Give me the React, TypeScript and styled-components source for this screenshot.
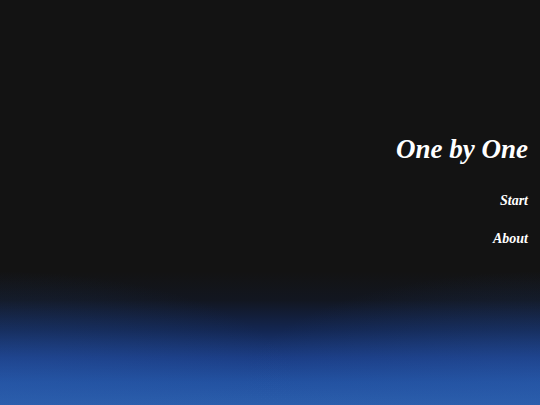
import styled, { createGlobalStyle } from 'styled-components';

const GlobalStyle = createGlobalStyle`
  html, body {
    margin: 0;
    padding: 0;
    background: #131313;
  }
`;

const Screen = styled.div`
  width: 540px;
  height: 405px;
  overflow: hidden;
  display: flex;
  flex-direction: column;
  align-items: flex-end;
  padding: 133px 12px 0 0;
  box-sizing: border-box;
  font-family: 'Liberation Serif', 'Times New Roman', serif;
  font-style: italic;
  font-weight: bold;
  color: #fff;
  background:
    radial-gradient(ellipse 55% 28% at 0% 95%, rgba(45, 95, 175, 0.3), rgba(45, 95, 175, 0) 100%),
    radial-gradient(ellipse 55% 28% at 100% 95%, rgba(45, 95, 175, 0.3), rgba(45, 95, 175, 0) 100%),
    linear-gradient(
      to bottom,
      #131313 0px,
      #131313 272px,
      #121620 300px,
      #132651 330px,
      #1b3d85 358px,
      #2251a0 382px,
      #2b5eac 405px
    );
`;

const Title = styled.h1`
  margin: 0;
  font-size: 27px;
  line-height: 32px;
  font-weight: bold;
`;

const Menu = styled.nav`
  display: flex;
  flex-direction: column;
  align-items: flex-end;
  gap: 22px;
  margin-top: 28px;
`;

const MenuItem = styled.a`
  font-size: 14px;
  line-height: 16px;
  color: #fff;
  text-decoration: none;
  cursor: pointer;
`;

export default function App() {
  return (
    <>
      <GlobalStyle />
      <Screen>
        <Title>One by One</Title>
        <Menu>
          <MenuItem>Start</MenuItem>
          <MenuItem>About</MenuItem>
        </Menu>
      </Screen>
    </>
  );
}
